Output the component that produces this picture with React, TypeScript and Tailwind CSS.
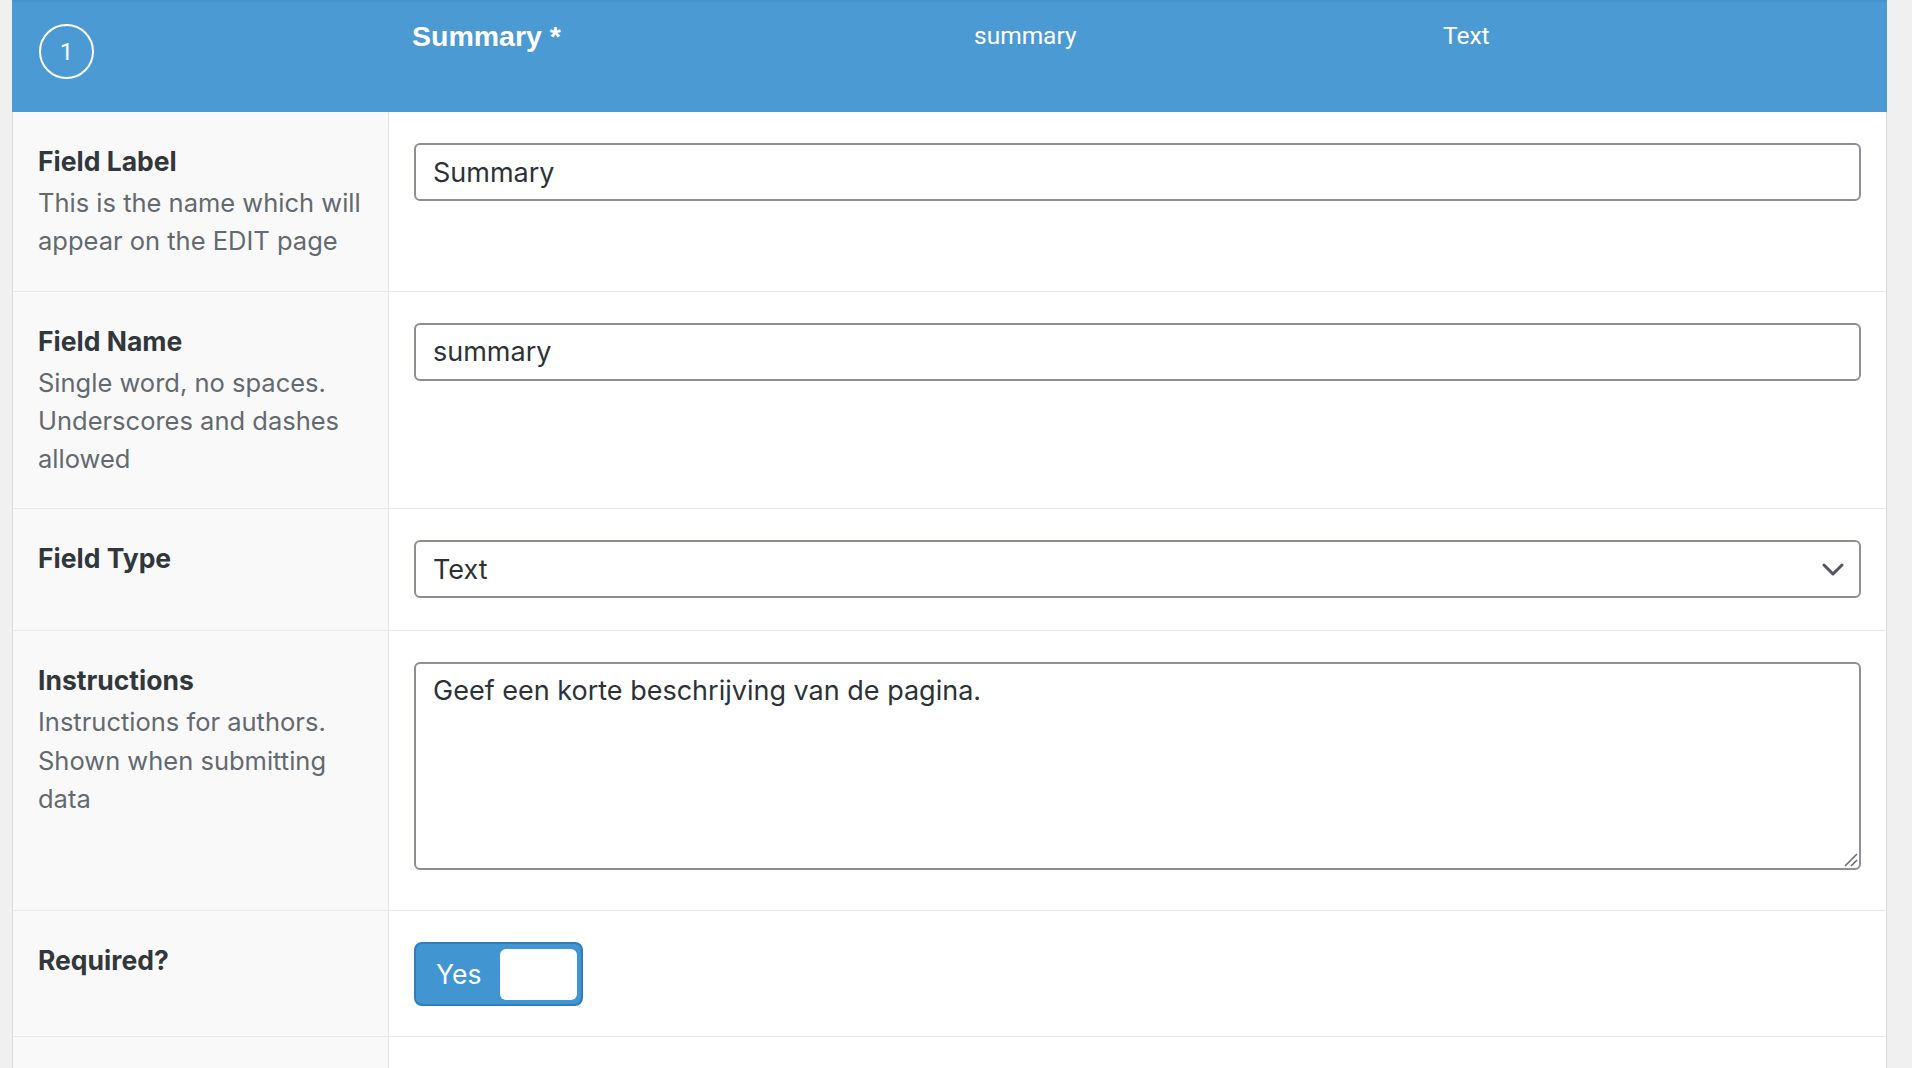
import React from 'react';

const body = { fontFamily: 'Inter, "Noto Sans", sans-serif' };
const head = { fontFamily: 'Roboto, "Liberation Sans", sans-serif' };

interface RowProps {
  label: string;
  desc?: string[];
  children: React.ReactNode;
  contentClass?: string;
}

const Row: React.FC<RowProps> = ({ label, desc, children, contentClass }) => (
  <div className="flex border-b border-[#e9e9ea]">
    <div className="w-[376px] shrink-0 bg-[#f9f9f9] border-r border-[#e4e4e5] pl-[25px] pr-4 pt-[30px] pb-[30px]">
      <div className="text-[26.5px] leading-[38px] font-bold text-[#32373c]">{label}</div>
      {desc && (
        <div className="mt-[4px] text-[25.5px] leading-[38.3px] text-[#646970]">
          {desc.map((d) => (
            <div key={d}>{d}</div>
          ))}
        </div>
      )}
    </div>
    <div className={`flex-1 pl-[25px] pr-[25px] pt-[31px] ${contentClass ?? ''}`}>{children}</div>
  </div>
);

export default function App() {
  return (
    <div className="w-[1912px] h-[1068px] overflow-hidden bg-[#f0f0f1]" style={body}>
      <div className="ml-[12px] w-[1875px] h-full flex flex-col">
        {/* header */}
        <div className="h-[112px] shrink-0 flex bg-[#4b9ad4] border-t-2 border-[#4592cc] text-white" style={head}>
          <div className="w-[376px] shrink-0 pl-[27px] pt-[22px]">
            <div className="w-[55px] h-[55px] rounded-full border-2 border-white flex items-center justify-center text-[24px]">
              1
            </div>
          </div>
          <div
            className="w-[562px] shrink-0 pl-[24px] pt-[16px] text-[28.5px] leading-[36px] font-bold"
            style={{ fontFamily: '"Liberation Sans", Arial, sans-serif' }}
          >
            Summary *
          </div>
          <div className="w-[469px] shrink-0 pl-[24px] pt-[16px] text-[24.5px] leading-[36px]">summary</div>
          <div className="flex-1 pl-[24px] pt-[16px] text-[24.5px] leading-[36px]">Text</div>
        </div>

        <div className="flex-1 flex flex-col bg-white border-l border-r border-[#dcdcde]">
          <Row label="Field Label" desc={['This is the name which will', 'appear on the EDIT page']}>
            <div className="h-[58px] rounded-[6px] border-2 border-[#8c8f94] flex items-center pl-[17px] pt-[2px] text-[27px] text-[#2c3338]">
              Summary
            </div>
          </Row>

          <Row label="Field Name" desc={['Single word, no spaces.', 'Underscores and dashes', 'allowed']}>
            <div className="h-[58px] rounded-[6px] border-2 border-[#8c8f94] flex items-center pl-[17px] pt-[2px] text-[27px] text-[#2c3338]">
              summary
            </div>
          </Row>

          <Row label="Field Type" contentClass="pb-[32px]">
            <div className="h-[58px] rounded-[6px] border-2 border-[#8c8f94] flex items-center justify-between pl-[17px] pr-[15px] text-[27px] text-[#2c3338]">
              <span className="pt-[2px]">Text</span>
              <svg width="22" height="13" viewBox="0 0 22 13" fill="none">
                <path d="M2 2l9 9 9-9" stroke="#50575e" strokeWidth="3" strokeLinecap="round" strokeLinejoin="round" />
              </svg>
            </div>
          </Row>

          <Row label="Instructions" desc={['Instructions for authors.', 'Shown when submitting', 'data']} contentClass="pb-[40px]">
            <div className="relative h-[208px] rounded-[6px] border-2 border-[#8c8f94] pl-[17px] pt-[11px] text-[27px] leading-[32px] text-[#2c3338]">
              Geef een korte beschrijving van de pagina.
              <svg className="absolute right-[1px] bottom-[1px]" width="14" height="14" viewBox="0 0 14 14">
                <path d="M1 13L13 1M7 13l6-6" stroke="#6b6e73" strokeWidth="1.6" />
              </svg>
            </div>
          </Row>

          <Row label="Required?" contentClass="pb-[30px]">
            <div className="w-[169px] h-[64px] rounded-[8px] bg-[#4195d1] border-2 border-[#2f7dbd] flex items-center pl-[20px] pr-[4px]">
              <span className="text-[26.5px] text-white">Yes</span>
              <div className="ml-auto w-[77px] h-[51px] rounded-[6px] bg-white" />
            </div>
          </Row>

          <div className="flex flex-1">
            <div className="w-[376px] shrink-0 bg-[#f9f9f9] border-r border-[#e4e4e5]" />
            <div className="flex-1" />
          </div>
        </div>
      </div>
    </div>
  );
}
